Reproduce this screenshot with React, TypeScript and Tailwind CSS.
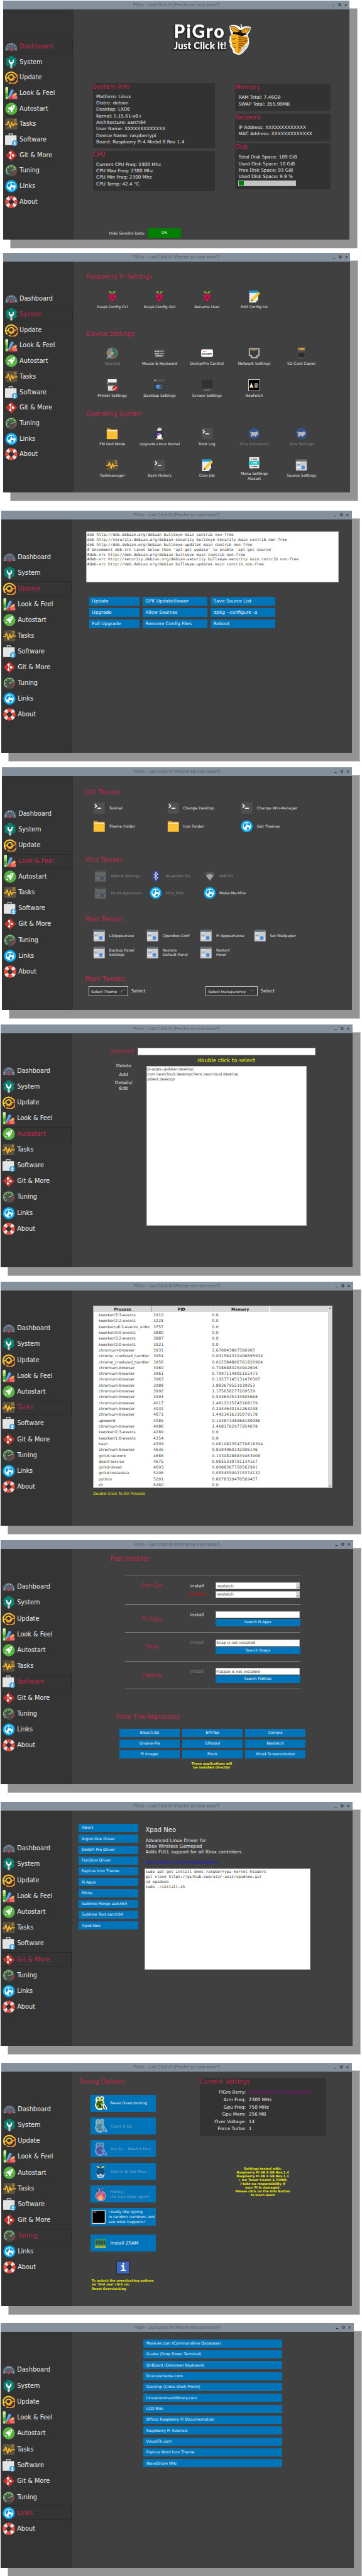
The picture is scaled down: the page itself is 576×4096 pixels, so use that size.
import React from "react";

type IconName =
  | "dashboard" | "system" | "update" | "look" | "autostart" | "tasks" | "software" | "git" | "tuning" | "globe" | "about"
  | "raspberry" | "edit" | "gparted" | "keyboard" | "deskpi" | "network" | "sdcard" | "printer" | "desktop" | "screen"
  | "neofetch" | "folder" | "tux" | "terminal" | "xfce" | "menu" | "source" | "bluetooth" | "wifi" | "pigreen" | "pigray"
  | "pipurple" | "skull" | "fire" | "console" | "ram";

const Globe = () => (
  <>
    <circle cx="12" cy="12" r="11.6" fill="#03a9f4" />
    <circle cx="12" cy="12" r="8.2" fill="#fff" />
    <path d="M5.2 9.5 8 6.5l3.2-.8.6 2.4-2 2.2.8 1.9-2.4.9.3 2.3-2.3-2.2zM13.5 5l4 2 1.6 4-2 .3-1.4-1.6-2.2.8-1-2.6zM12.3 14l3 .2 1.7 1.4-1.8 2.9-3 .6-.7-2.6z" fill="#0a96dc" />
  </>
);

const Pulse = () => (
  <>
    <rect x="1" y="1.5" width="22" height="21" rx="1" fill="#5b5240" />
    <path d="M17 3.5h5M17 6.2h5M17 8.9h5" stroke="#c9962a" strokeWidth="1.4" />
    <path d="M0 13h4l2.4-6 3.4 12 3-10 2.2 7 2-3.5h7" fill="none" stroke="#fdb827" strokeWidth="2.1" strokeLinejoin="round" />
  </>
);

const PiMascot = ({ body, leaf, line, rim }: { body: string; leaf: string; line: string; rim: string }) => (
  <>
    <path d="M4 2q4-3.500 6.800 0 3-3.500 7.200-.5 1 4-1.500 5.500 2.500 3 2 6l5 7.500-1 3.500-5-2.500q-4 3.500-8 2.500-5-1-6-5-3-4 .5-8Q2.500 7 4 2z" fill={rim} />
    <path d="M5.300 2.800q4-2 5 2L10 6.500Q5.500 7 5.300 2.800zM11.500 4q2-3 5-1.500-.5 4-5 4z" fill={leaf} />
    <path d="M6.500 8.500q5-2.500 9 0 2.500 3 1.300 6.500-2 6.500-6.600 6.500t-5.700-5.500q-.8-4 2-7.500z" fill={body} />
    <path d="M8 9l2.900 3 3.600-3M5 15l4-1.500 2.200 3 3-3 2.500 1M8.500 21l2.500-4.500L13.500 20M5.500 11l3.300 2.300M7.500 5.500l-1-2M13.500 5l1.500-1.800" fill="none" stroke={line} strokeWidth="1.200" />
    <path d="M13.500 15.500q2-2.500 4-1l4 8M15.500 15.500l2 7" fill="none" stroke={rim} strokeWidth="1.500" />
    <path d="M14.700 17l1.500 5.500M18 16.500l2.500 5" fill="none" stroke={line} strokeWidth="1.500" />
  </>
);

const drawings: Record<IconName, React.ReactNode> = {
  dashboard: (
    <>
      <path d="M.5 19.500V16a11.500 11.500 0 0 1 23 0v3.500h-7l-4.500-2-4.500 2z" fill="#546371" />
      <path d="M2.500 14.500l2 .7M4.700 9.800l1.600 1.300M8.500 6.800l.8 1.900M12 6v2M15.500 6.800l-.8 1.900M19.300 9.800l-1.600 1.300M21.500 14.500l-2 .7M2 18h2M20 18h2" stroke="#e8e8e8" strokeWidth="1.200" />
      <circle cx="12" cy="18.500" r="2.200" fill="#e0304c" />
      <path d="M11 18l5-5.500-2.500 7z" fill="#e0304c" />
    </>
  ),
  system: (
    <>
      <path d="M8.500 0h7l1.200 3.500 3.300-.7 3 5.700-2.300 2.500 2.300 3-3.300 5.500-3.200-.6-1.300 3.600H8.800l-1.300-3.600-3.200.6L1 14l2.300-3L1 8.500l3-5.700 3.300.7z" fill="#0b8071" />
      <path d="M7 6.500v5q1 3 3 3.500v7.500q2 2.500 4 0V15q2-.5 3-3.500v-5l-2.500 1v3.300q-2.500 1.600-5 0V7.500z" fill="#f4f4f4" />
      <path d="M10.200 17h3.600v5.500q-1.800 2.300-3.600 0z" fill="#c9d0d0" stroke="#59706c" strokeWidth=".7" />
    </>
  ),
  update: (
    <g fill="none" strokeLinecap="round">
      <path d="M3.800 19.500A10 10 0 1 1 19.500 5.500" stroke="#fbc72f" strokeWidth="2.600" />
      <path d="M20.200 5.500A10 10 0 1 1 8 22" stroke="#f9962b" strokeWidth="2.600" />
      <path d="M3 13.500q2.500-2 5 .5a4.500 4.500 0 1 0 3-7q-3 .5-4.500 3.500" stroke="#fbc72f" strokeWidth="2.300" />
      <path d="M21.500 11q-2 2-4.800 0M17 12a5 5 0 0 1-9.500 3" stroke="#f9962b" strokeWidth="2.300" />
    </g>
  ),
  look: (
    <>
      <path d="M5 21 11.500 5.500l4.200-.5.800 3.200L9 22z" fill="#5aa7ef" />
      <path d="M6.500 23 16 13.500l4.500-2.700 2.300 2.500-1 3z" fill="#f8a25c" />
      <path d="M6.500 23.500 7 20l9-3.500 6.500.5 1 3-.5 3.500z" fill="#f26b6b" />
      <path d="M6.500 23.500 12 16l3 7.500z" fill="#d23a2e" />
      <rect x=".7" y="0" width="5.300" height="24" rx="1.500" fill="#4fae2f" />
      <path d="M.7 1.500Q3.300-1.500 6 1.500V7H.7z" fill="#c9efa3" />
      <path d="M.7 7H6v5H.7z" fill="#8fd860" />
      <circle cx="3.300" cy="20.700" r="1.600" fill="#fff" />
    </>
  ),
  autostart: (
    <>
      <circle cx="12" cy="12" r="11.600" fill="#58b542" />
      <path d="M18.500 4.800q-5 .2-8 4l-3.500.7-1.500 3 3 .2 2.800 3 .2 3 3-1.700.7-3.400q3.700-3.500 3.300-8.800z" fill="#fff" />
      <path d="M5 18.500l1-3.500 2.500 2.500z" fill="#fff" />
      <circle cx="14.700" cy="8.900" r="1.300" fill="#58b542" />
    </>
  ),
  tasks: <Pulse />,
  software: (
    <>
      <path d="M7.500 4.500V1h7v3.500" fill="none" stroke="#dedede" strokeWidth="1.300" />
      <rect x="0" y="4" width="22" height="18.500" rx=".8" fill="#e4e4e4" />
      <circle cx="18.500" cy="18.600" r="5.400" fill="#3aa3dd" />
      <path d="M17.500 15h2v3h2l-3 2.800-3-2.800h2zM15.500 21.300h6v1.200h-6z" fill="#fff" />
    </>
  ),
  git: (
    <>
      <rect x="4" y="4" width="16" height="16" rx="1" transform="rotate(45 12 12)" fill="#c5352b" />
      <path d="M12 .5 23.500 12 12 23.500" fill="#ac2b24" opacity=".35" />
      <path d="M10.500 7v10M10.500 7l4.500 5" stroke="#fff" strokeWidth="1" />
      <circle cx="10.300" cy="7" r="2.200" fill="#fff" />
      <circle cx="10.300" cy="16.800" r="2.200" fill="#fff" />
      <circle cx="15.300" cy="12.200" r="2.200" fill="#fff" />
    </>
  ),
  tuning: (
    <>
      <circle cx="12" cy="12" r="11.600" fill="#4e4e4e" />
      <path d="M6 20A9.500 9.500 0 1 1 20.500 9" fill="none" stroke="#7fd672" strokeWidth="1.500" />
      <path d="M21 12a9.500 9.500 0 0 1-3.500 8" fill="none" stroke="#d8352f" strokeWidth="2" strokeDasharray="3 1" />
      <path d="M12 3v4M6 6l2 2M3 13h3M18 6l-2 2M6.500 19l1.200-2M11 13l9-3.500" stroke="#7fd672" strokeWidth="1.300" />
    </>
  ),
  globe: <Globe />,
  about: (
    <>
      <circle cx="12" cy="12" r="8.300" fill="none" stroke="#e64a3c" strokeWidth="7" />
      <circle cx="12" cy="12" r="8.300" fill="none" stroke="#e6e6e6" strokeWidth="7" strokeDasharray="5 8.038" strokeDashoffset="-4" />
    </>
  ),
  raspberry: (
    <>
      <path d="M5.500 1.500q5-1 6.300 3.800Q6 7 5.500 1.500zM18.500 1.500q-5-1-6.300 3.800Q18 7 18.500 1.500z" fill="#6cae3a" />
      <path d="M8 6h8l3 4.500-.5 5.500-3 4-3.500 2.500L8.500 20l-3-4L5 10.500z" fill="#c41949" />
      <path d="M8 9l4 3 4-3M12 12v5M5.500 13.500 9 16l3-1.500 3 1.500 3.500-2.500M9 16l-.5 3.500M15 16l.5 3.500M12 6v2" fill="none" stroke="#5c1029" strokeWidth="1" />
    </>
  ),
  edit: (
    <>
      <path d="M2 1h18v17l-5 6H2z" fill="#ececec" />
      <path d="M1.500.5h19V5h-19z" fill="#149fdb" />
      <path d="M15 18.500h5L15 24z" fill="#c9c9c9" />
      <path d="M20.500 2.500 24 6 10.500 20l-5.500 2 1.500-5.500z" fill="#f6c92d" />
      <path d="M6.500 17.500 9.500 20.500 5 22z" fill="#6d5a2a" />
    </>
  ),
  gparted: (
    <>
      <circle cx="12" cy="12" r="11.500" fill="#7f8583" />
      <path d="M12 12 12 1.500A10.500 10.500 0 0 1 17 21z" fill="#3e7359" />
      <path d="M12 12 3 7A10.500 10.500 0 0 0 2 15z" fill="#a28240" />
      <path d="M12 12l5 9-6 1.500z" fill="#99504c" />
      <circle cx="12" cy="12" r="3" fill="#a9adab" />
      <path d="M1 23.500 9 15" stroke="#c9c9c9" strokeWidth="1.500" />
    </>
  ),
  keyboard: (
    <>
      <rect x="1" y="4.500" width="22" height="16" rx="1" fill="#4e4e4e" />
      <path d="M3.500 8.500h13M3.500 13h9.500" stroke="#f2f2f2" strokeWidth="2.200" strokeDasharray="2 1" />
      <path d="M17.500 8.500h3M14 13h3" stroke="#f08b4a" strokeWidth="2.200" />
      <path d="M18 13h2.500M4.500 17.500h14" stroke="#f2f2f2" strokeWidth="1.600" />
    </>
  ),
  deskpi: (
    <>
      <rect x="0" y="4.500" width="24" height="15" rx="3.500" fill="#fff" stroke="#bdbdbd" strokeWidth=".8" />
      <path d="M3.500 8.500h7" stroke="#e04040" strokeWidth="1" />
      <text x="12" y="15.500" textAnchor="middle" fontFamily="DejaVu Sans" fontWeight="700" fontSize="5.200" fill="#333">DeskPi</text>
    </>
  ),
  network: (
    <>
      <path d="M2.500 3h19v14h-4v4h-11v-4h-4z" fill="#3a3a3a" stroke="#adadad" strokeWidth="2.800" strokeLinejoin="round" />
      <path d="M7 6h10" stroke="#d9a93e" strokeWidth="3" strokeDasharray="1 1" />
    </>
  ),
  sdcard: (
    <>
      <path d="M4.500 1h15.500v22H4z" fill="#4d4d4d" />
      <path d="M6 3.500h13" stroke="#e9b230" strokeWidth="5" strokeDasharray="2 .6" />
      <rect x="5.500" y="11" width="13" height="9" fill="#2d2d2d" />
    </>
  ),
  printer: (
    <>
      <rect x="3" y="0" width="18" height="7" fill="#f2f2f2" />
      <path d="M1 7h22v10H1z" fill="#4b4b4b" />
      <rect x="1.500" y="8" width="2.500" height="2.500" fill="#77e03c" />
      <rect x="3.500" y="13" width="16" height="10" fill="#d8d8d8" />
      <circle cx="18" cy="18.500" r="5.500" fill="#b9302b" />
      <path d="M15.500 20.500l3-1 1.500-3" stroke="#fff" strokeWidth="1" fill="none" />
      <circle cx="15.500" cy="20.500" r="1.300" fill="#fff" />
      <circle cx="19.500" cy="16.800" r="1.300" fill="#fff" />
    </>
  ),
  desktop: (
    <>
      <rect x="1" y="0" width="22" height="6" fill="#4f4f4f" />
      <rect x="1" y="6" width="22" height="17.500" fill="#393d40" />
      <rect x="1.800" y="1" width="2.500" height="2.500" fill="#e0e0e0" />
      <rect x="5" y="11" width="14" height="7.500" rx="3.700" fill="#4a93e6" />
      <circle cx="15.500" cy="14.700" r="3.400" fill="#474c50" />
    </>
  ),
  screen: (
    <>
      <rect x="1" y="1.500" width="22" height="18" rx="1" fill="#323232" />
      <path d="M1 18.500h22v1.500H1z" fill="#505050" />
      <path d="M5 21h14v2H5z" fill="#7f7f7f" />
    </>
  ),
  neofetch: (
    <>
      <rect x=".7" y=".7" width="22.600" height="22.600" fill="#000" stroke="#d0d0d0" strokeWidth="1.300" />
      <path d="M3 16.500q0-3 1.700-5.500 0-3.500 1.600-3.500T8 11q1.700 2.500 1.700 5.500z" fill="#eadfd0" />
      <path d="M2.500 17h3M7.500 17h3" stroke="#efb13e" strokeWidth="1.500" />
      <path d="M12.500 9h7M12.500 11.500h8M12.500 14h6M12.500 16.500h8" stroke="#dcdcdc" strokeWidth="1.400" />
    </>
  ),
  folder: (
    <>
      <path d="M1 1.500h7l2 2h13v6H1z" fill="#e79c0c" />
      <path d="M2 5h20v5H2z" fill="#f3f3f3" />
      <path d="M1 7h22v16H1z" fill="#fbc033" />
    </>
  ),
  tux: (
    <>
      <path d="M5 20q-3-4 0-9 2-3 3-7 4-7 8 0 0 4 2 7 4 6 0 10z" fill="#20304f" />
      <path d="M7.500 5q.5-5 5-5t4.500 4.500l-1.500 1.500-7 .5z" fill="#d4d4d4" />
      <path d="M8 20q-2-6 3-9 7 1 6 9l-3 3h-4z" fill="#f4f4f4" />
      <path d="M3 18 9.500 7.500 8 17z" fill="#3140c4" />
      <path d="M8 15l8-6 .8 2-7.800 6z" fill="#b9243a" />
      <path d="M5.500 21h5v2.500h-5zM14 21h5v2.500h-5z" fill="#f2d9b4" />
    </>
  ),
  terminal: (
    <>
      <rect x="1" y="1" width="22" height="22" rx="1" fill="#505050" />
      <path d="M3.500 4.500 7 8l-3.500 3.500" fill="none" stroke="#f4f4f4" strokeWidth="2" />
      <path d="M8.500 12.500h7.500" stroke="#f4f4f4" strokeWidth="2" />
    </>
  ),
  xfce: (
    <>
      <circle cx="12" cy="12" r="11.300" fill="#35528c" />
      <path d="M2.500 7l3.500 2.500 2.500-1 6 .5 2.500-2 1 1.500 1.800-1-.3 3.500 1 1.500-3 3-2 .5.500 2.500h-2l-.8-2.500H9l-2 2.500H5l1-6z" fill="#b3b7bb" />
    </>
  ),
  menu: (
    <>
      <path d="M2 0h20v22H9l-2 2-1.500-2H2z" fill="#e6e6e6" />
      <path d="M1 7.500h22v7.500H1z" fill="#1dbfc0" />
      <path d="M6 4h2M10 4h8M6 18.500h2M10 18.500h8" stroke="#555" strokeWidth="1.700" />
      <path d="M6 11.200h2M10 11.200h8" stroke="#fff" strokeWidth="1.700" />
    </>
  ),
  source: (
    <>
      <rect x="1" y="1" width="22" height="22" rx="1" fill="#c9cbcd" />
      <path d="M1 1h22v3.500H1z" fill="#606a70" />
      <path d="M3.500 7h6" stroke="#fff" strokeWidth="2" strokeDasharray="2 1.500" />
      <path d="M3.500 11h6" stroke="#4b8ae0" strokeWidth="2" strokeDasharray="2 1.500" />
      <path d="M3 17h18" stroke="#fff" strokeWidth="1.700" />
      <circle cx="15.500" cy="16.700" r="3.700" fill="#4b8ae0" />
    </>
  ),
  bluetooth: (
    <>
      <ellipse cx="12" cy="12" rx="8.300" ry="11.700" fill="#33407c" />
      <path d="M8 7.800l8 8-4 3.700v-15l4 3.700-8 8" fill="none" stroke="#cdd2de" strokeWidth="1.400" />
    </>
  ),
  wifi: (
    <>
      <path d="M1 7.500Q12-1 23 7.500L12 21z" fill="#565656" />
      <path d="M4.500 11.500Q12 5.500 19.500 11.500L12 21z" fill="#a3a3a3" />
    </>
  ),
  pigreen: <PiMascot body="#6f9f1c" leaf="#7fb01f" line="#15240a" rim="#f0f2ea" />,
  pigray: <PiMascot body="#6f9e9f" leaf="#7fae8e" line="#2c6c9c" rim="#86b4d8" />,
  pipurple: <PiMascot body="#6d5ea8" leaf="#3e78a6" line="#3a4c9a" rim="#6ca4d4" />,
  skull: (
    <>
      <path d="M4.500 1.500Q8-1 12 2.500q4-3.500 7.500-1 .5 4.500-2 6 3 2 2.500 7l-1.500 5-2 3.500h-9L5.500 19.500 4 14.500q-.5-5 2.500-7-2.500-1.500-2-6z" fill="#12507f" stroke="#3c8cc4" strokeWidth=".9" />
      <path d="M5.500 2.500q4-1.500 5.500 3-5 1-5.500-3zM18.500 2.500q-4-1.500-5.500 3 5 1 5.500-3z" fill="#c6d188" />
      <path d="M4.700 14.500 7 17.500l3.500-.5 1.500-2 1.500 2 3.500.5 2.300-3-1.300 5-2 3H8l-2-3z" fill="#d3e3ef" />
      <path d="M8.500 19.800h7" stroke="#12507f" strokeWidth="1.300" />
    </>
  ),
  fire: (
    <>
      <path d="M5 2q4-3 7 1 3-4 7-1v8H5z" fill="#26578c" />
      <path d="M6 2q3-2 5.500 2M18 2q-3-2-5.500 2" fill="none" stroke="#7eaed6" strokeWidth="1" />
      <path d="M3 14 6 8l1 3 3-8 3 7 3-5 1 5 2-2 2 7q0 8-8 9-9-1-10-10z" fill="#c65a7b" stroke="#9fb9d6" strokeWidth=".8" />
      <path d="M7 17l2-4 2 3 2-5 4 7q0 5-5 5.500-5-.5-5-6.500z" fill="#ec9a6e" />
      <path d="M10 20l2-5 2 5-2 3z" fill="#f2c98a" />
    </>
  ),
  console: (
    <>
      <rect x=".7" y=".7" width="22.600" height="22.600" rx=".8" fill="#000" stroke="#dcdcdc" strokeWidth="1.400" />
      <path d="M3 3.500h5" stroke="#fff" strokeWidth="1" />
    </>
  ),
  ram: (
    <>
      <rect x="2" y="4.500" width="20" height="15" fill="#3a9a50" />
      <path d="M3.500 10.500h17" stroke="#39474f" strokeWidth="7" strokeDasharray="3.500 1" />
      <path d="M2.500 18.500h19" stroke="#f3bd3c" strokeWidth="3" strokeDasharray="1.500 .5" />
    </>
  ),
};

const Ico = ({ name, className = "size-[20px]" }: { name: IconName; className?: string }) => (
  <svg viewBox="0 0 24 24" className={`block shrink-0 ${className}`}>
    {drawings[name]}
  </svg>
);

const navItems: [string, IconName][] = [
  ["Dashboard", "dashboard"],
  ["System", "system"],
  ["Update", "update"],
  ["Look & Feel", "look"],
  ["Autostart", "autostart"],
  ["Tasks", "tasks"],
  ["Software", "software"],
  ["Git & More", "git"],
  ["Tuning", "tuning"],
  ["Links", "globe"],
  ["About", "about"],
];

const Win = ({ active, className, children }: { active: string; className: string; children: React.ReactNode }) => (
  <section
    className={`flex shrink-0 flex-col bg-[#404040] shadow-[12px_13px_0_#939393,12px_13px_0_1px_#c6c6c6] ${className}`}
  >
    <header className="flex h-[14px] shrink-0 items-center bg-[#84909b]">
      <span className="w-[20%]" />
      <h1 className="flex-1 whitespace-nowrap text-center font-['Roboto'] text-[7.15px] leading-none text-[#56616c]">
        PiGro - Just Click It! (Perche sei cosi serio?)
      </h1>
      <svg viewBox="0 0 110 14" className="h-full w-[20%]">
        <path d="M82.500 8.500h3.500" stroke="#2d3338" strokeWidth="1" />
        <rect x="93" y="5" width="2.800" height="3" fill="none" stroke="#2d3338" strokeWidth="1" />
        <path d="M102.500 5l3.200 3.500M105.700 5l-3.200 3.500" stroke="#2d3338" strokeWidth="1" />
      </svg>
    </header>
    <div className="flex min-h-0 flex-1">
      <nav className="flex h-full w-[20.3%] shrink-0 flex-col bg-[#343434] pt-[8.5%]">
        {navItems.map(([label, icon]) => (
          <div key={label} className="flex h-[7.725%] items-center px-[1%]">
            <div
              className={`flex h-[92%] w-full items-center gap-[3px] border pl-[1px] ${
                label === active ? "border-[#2a2a2a] text-[#c3264d]" : "border-transparent text-[#ececec]"
              }`}
            >
              <Ico name={icon} />
              <span className="whitespace-nowrap text-[9.75px] leading-[12px]">{label}</span>
            </div>
          </div>
        ))}
      </nav>
      <main className="flex min-w-0 flex-1 flex-col items-start">{children}</main>
    </div>
  </section>
);

const Heading = ({ children, className = "" }: { children: React.ReactNode; className?: string }) => (
  <h2 className={`h-[12px] whitespace-nowrap text-[9.85px] leading-[12px] text-[#c3264d] ${className}`}>{children}</h2>
);

const Panel = ({ title, lines, className, children }: { title: string; lines: string[]; className: string; children?: React.ReactNode }) => (
  <div className={`bg-[#323232] ${className}`}>
    <Heading>{title}</Heading>
    <div className="pl-[5.5px] pt-[5px]">
      {lines.map((l) => (
        <p key={l} className="whitespace-nowrap text-[7.3px] leading-[10.35px] text-[#e8e8e8]">{l}</p>
      ))}
      {children}
    </div>
  </div>
);

const Logo = () => (
  <svg viewBox="0 0 136 56" className="ml-[157px] mt-[22px] h-[52px] w-[126px] shrink-0 overflow-visible">
    <g
      fontFamily="Lato, sans-serif"
      strokeLinejoin="round"
      fill="#fff"
      stroke="#fff"
      className="[filter:drop-shadow(-2px_1px_0_#1b1b1b)_drop-shadow(1px_1px_1px_#1b1b1b)]"
    >
      <text x="3" y="25" fontSize="30" fontWeight="700" textLength="86" strokeWidth=".8">PiGro</text>
      <text x="3" y="44.500" fontSize="16" fontWeight="700" textLength="90" strokeWidth=".4">Just Click It!</text>
    </g>
    <path
      d="M98 4q10-4 18 2l1-5 3 .5.500 5q7-4 15 0-1 9-6 13 3 5 3 12 0 9-7 15-6 8-12 8-6-1-9-4-1-5-3-8-4-3-2-7-4-5-1-9-1-5 3-7Q98 13 98 4z"
      fill="#fff"
      stroke="#262626"
      strokeWidth=".6"
    />
    <path d="M104 16q13-10 24 3l-10 4-13-2z" fill="#111" />
    <path d="M100 5.500q11-2 16 9-13 5-16-9zM133.500 8.500q-10-3-16 6.500 11 7 16-6.500z" fill="#f0a81e" stroke="#2a1b04" strokeWidth=".8" />
    <path d="M103 7.500l11 6M131 9.500l-12 5" stroke="#5b3a06" strokeWidth=".7" />
    <path d="M117.500 8q-.5-4 1-6" stroke="#111" strokeWidth="1.200" fill="none" />
    <path d="M102 20q5-4 13 1l14 2 1 9q-8 8-13 20-6 0-9-3-1-6-4-9-3-3-1-7-5-3-1-7-3-3 0-6z" fill="#f6ad1e" />
    <path d="M114 21l15 3 1 8q-8 6-14 17l-3 2z" fill="#dc920f" />
    <path d="M114 24l14 2M114 27.500l15 2M114 31l14 1M114 34.500l11 1M114 38l8 1M114 41.500l5 1M102 26q4 3 7 0M103 33q3 4 7 0M104 40q3 3 6 0" fill="none" stroke="#4b3004" strokeWidth=".9" />
    <path d="M131 33q-1 8-7 13-5 6-9 6 4-5 4-11 7 0 12-8z" fill="#d4d4d4" />
  </svg>
);

const Tile = ({ icon, label, dim, className = "" }: { icon: IconName; label: string; dim?: boolean; className?: string }) => (
  <div className={`flex h-[36px] w-[75.3px] flex-col items-center gap-[3px] ${className}`}>
    <Ico name={icon} className="size-[19px]" />
    <span className={`whitespace-pre text-center text-[6px] leading-[8px] ${dim ? "text-[#8a8a8a]" : "text-[#e6e6e6]"}`}>{label}</span>
  </div>
);

const RowItem = ({ icon, label, dim, faint, className = "" }: { icon: IconName; label: string; dim?: boolean; faint?: boolean; className?: string }) => (
  <div className={`flex h-[20px] shrink-0 items-center gap-[6px] ${className}`}>
    <Ico name={icon} className={faint ? "size-[19.5px] opacity-25" : "size-[19.5px]"} />
    <span className={`whitespace-pre text-[6px] leading-[7.7px] ${dim ? "text-[#8a8a8a]" : "text-[#e6e6e6]"}`}>{label}</span>
  </div>
);

const Btn = ({ children, className = "" }: { children: React.ReactNode; className?: string }) => (
  <button className={`flex shrink-0 items-center whitespace-nowrap bg-[#0074b9] leading-none text-[#eef4f9] ${className}`}>{children}</button>
);

const sources = `deb http://deb.debian.org/debian bullseye main contrib non-free
deb http://security.debian.org/debian-security bullseye-security main contrib non-free
deb http://deb.debian.org/debian bullseye-updates main contrib non-free
# Uncomment deb-src lines below then 'apt-get update' to enable 'apt-get source'
#deb-src http://deb.debian.org/debian bullseye main contrib non-free
#deb-src http://security.debian.org/debian-security bullseye-security main contrib non-free
#deb-src http://deb.debian.org/debian bullseye-updates main contrib non-free`;

const xpadScript = `sudo apt-get install dkms raspberrypi-kernel-headers
git clone https://github.com/atar-axis/xpadneo.git
cd xpadneo
sudo ./install.sh`;

const processes: [string, string, string][] = [
  ["kworker/3:3-events", "2910", "0.0"],
  ["kworker/2:2-events", "3228", "0.0"],
  ["kworker/u8:2-events_unbo", "3757", "0.0"],
  ["kworker/0:0-events", "3880", "0.0"],
  ["kworker/3:2-events", "3887", "0.0"],
  ["kworker/2:0-events", "3921", "0.0"],
  ["chromium-browser", "3931", "2.670843867566907"],
  ["chrome_crashpad_handler", "3954", "0.031564332406695934"],
  ["chrome_crashpad_handler", "3956", "0.012584806761826904"],
  ["chromium-browser", "3960", "0.7086883254942606"],
  ["chromium-browser", "3961", "0.7097114805155473"],
  ["chromium-browser", "3963", "0.19537145131470307"],
  ["chromium-browser", "3988", "1.883679551939953"],
  ["chromium-browser", "3992", "1.175656277209529"],
  ["chromium-browser", "3993", "0.5936345433505668"],
  ["chromium-browser", "4017", "1.4812215243168139"],
  ["chromium-browser", "4032", "0.2944640151263238"],
  ["chromium-browser", "4071", "1.4423416335079178"],
  ["upowerd", "4085", "0.10487338968189086"],
  ["chromium-browser", "4086", "1.4681762977954078"],
  ["kworker/2:3-events", "4289", "0.0"],
  ["kworker/1:0-events", "4354", "0.0"],
  ["bash", "4399", "0.061082354770818394"],
  ["chromium-browser", "4635", "0.8194960142996146"],
  ["gvfsd-network", "4666", "0.10308286839463908"],
  ["dconf-service", "4675", "0.0655330791134157"],
  ["gvfsd-dnssd", "4693", "0.0988367750562991"],
  ["gvfsd-metadata", "5106", "0.05545500215374132"],
  ["python", "5201", "0.8078320470569457"],
  ["sh", "5260", "0.0"],
];

const gitApps = ["Albert", "Argon One Driver", "DeskPi Pro Driver", "FanShim Driver", "Papirus Icon Theme", "Pi-Apps", "PiKiss", "Sublime Merge aarch64", "Sublime Text aarch64", "Xpad-Neo"];

const links = [
  "Mankier.com (Commandline Database)",
  "Guake (Drop Down Terminal)",
  "OnBoard (Onscreen Keyboard)",
  "Draculatheme.com",
  "Starship (Cross-Shell-Promt)",
  "Linuxcommandlibrary.com",
  "LCD Wiki",
  "Offical Raspberry Pi Documentation",
  "Raspberry Pi Tutorials",
  "VisualTk.com",
  "Papirus Nord Icon Theme",
  "WaveShare Wiki",
];

const settings: [string, string][] = [
  ["PiGro Berry:", "Honey,the fuse blew again!"],
  ["Arm Freq:", "2300 MHz"],
  ["Gpu Freq:", "750 MHz"],
  ["Gpu Mem:", "256 MB"],
  ["Over Voltage:", "14"],
  ["Force Turbo:", "1"],
];

const Dashboard = () => (
  <Win active="Dashboard" className="ml-[5px] mt-[1px] h-[380px] w-[551px]">
    <Logo />
    <div className="ml-[30.7px] mt-[42.5px] flex gap-[32.4px]">
      <div className="flex w-[194px] flex-col gap-[5px]">
        <Panel
          title="System Info"
          className="h-[103px]"
          lines={["Platform: Linux", "Distro: debian", "Desktop: LXDE", "Kernel: 5.15.61-v8+", "Architecture: aarch64", "User Name: XXXXXXXXXXXXX", "Device Name: raspberrypi", "Board: Raspberry Pi 4 Model B Rev 1.4"]}
        />
        <Panel title="CPU" className="h-[64px]" lines={["Current CPU Freq: 2300 Mhz", "CPU Max Freq: 2300 Mhz", "CPU Min Freq: 2300 Mhz", "CPU Temp: 42.4 °C"]} />
      </div>
      <div className="flex w-[152px] flex-col gap-[4.5px] pt-[1.8px]">
        <Panel title="Memory" className="h-[43px]" lines={["RAM Total: 7.46GB", "SWAP Total: 355.99MB"]} />
        <Panel title="Network" className="h-[43px]" lines={["IP Address: XXXXXXXXXXXXX", "MAC Address: XXXXXXXXXXXXX"]} />
        <Panel title="Disk" className="h-[73px]" lines={["Total Disk Space: 109 GiB", "Used Disk Space: 10 GiB", "Free Disk Space: 93 GiB", "Used Disk Space: 9.9 %"]}>
          <div className="-ml-[.5px] mt-[.8px] h-[9px] w-[92px] border border-[#b4b4b4] bg-[#c4c4c4]">
            <div className="h-full w-[8px] bg-[#008000]" />
          </div>
        </Panel>
      </div>
    </div>
    <div className="ml-[56.7px] mt-[59px] flex items-center gap-[4px] text-[6px] text-[#e8e8e8]">
      <span className="w-[57.5px] whitespace-nowrap">Hide Sensitiv Data:</span>
      <button className="h-[15px] w-[52.5px] bg-[#008000] leading-none text-white">ON</button>
    </div>
  </Win>
);

const System = () => (
  <Win active="System" className="ml-[5px] mt-[21px] h-[381px] w-[552px]">
    <Heading className="ml-[20px] mt-[17.8px]">Raspberry Pi Settings</Heading>
    <div className="ml-[24px] mt-[15.9px] flex">
      <Tile icon="raspberry" label="Raspi-Config CLI" />
      <Tile icon="raspberry" label="Raspi-Config GUI" />
      <Tile icon="raspberry" label="Rename User" />
      <Tile icon="edit" label="Edit Config.txt" />
    </div>
    <Heading className="ml-[20px] mt-[27.1px]">Device Settings</Heading>
    <div className="ml-[24px] mt-[15.4px] grid grid-cols-5 gap-y-[14.6px]">
      <Tile icon="gparted" label="Gparted" dim />
      <Tile icon="keyboard" label="Mouse & Keyboard" />
      <Tile icon="deskpi" label="DeskpiPro Control" />
      <Tile icon="network" label="Network Settings" />
      <Tile icon="sdcard" label="SD Card Copier" />
      <Tile icon="printer" label="Printer Settings" />
      <Tile icon="desktop" label="Desktop Settings" />
      <Tile icon="screen" label="Screen Settings" />
      <Tile icon="neofetch" label="NeoFetch" />
    </div>
    <Heading className="ml-[20px] mt-[13.4px]">Operating System</Heading>
    <div className="ml-[24px] mt-[15.7px] grid grid-cols-5 gap-y-[14.3px]">
      <Tile icon="folder" label="FM God Mode" />
      <Tile icon="tux" label="Upgrade Linux Kernel" />
      <Tile icon="terminal" label="Boot Log" />
      <Tile icon="xfce" label="Xfce Autostarts" dim />
      <Tile icon="xfce" label="Xfce Settings" dim />
      <Tile icon="tasks" label="Taskmanager" />
      <Tile icon="terminal" label="Bash History" />
      <Tile icon="edit" label="Cron Job" />
      <Tile icon="menu" label={"Menu Settings\nAlacart"} className="-mt-[3.5px]" />
      <Tile icon="source" label="Source Settings" />
    </div>
  </Win>
);

const Update = () => (
  <Win active="Update" className="ml-[2px] mt-[29px] h-[385px] w-[558px]">
    <pre className="ml-[21.5px] mt-[19px] h-[81px] w-[402px] border border-[#b9b9b9] bg-white pl-[1px] font-['DejaVu_Sans_Mono'] text-[6.15px] leading-[7.88px] text-[#3a3a3a]">
      {sources}
    </pre>
    <div className="ml-[26.3px] mt-[23px] grid grid-cols-[80.5px_103.5px_103.5px] gap-x-[4.7px] gap-y-[4.2px] text-[7.3px]">
      {["Update", "GPK UpdateViewer", "Save Source List", "Upgrade", "Allow Sources", "dpkg --configure -a", "Full Upgrade", "Remove Config Files", "Reboot"].map((l) => (
        <Btn key={l} className="h-[13.9px] pl-[4.8px]">{l}</Btn>
      ))}
    </div>
  </Win>
);

const Select = ({ label, className }: { label: string; className: string }) => (
  <div className={`flex h-[15.5px] items-center justify-between border-[1.5px] border-[#bdbdbd] bg-[#383838] pl-[3px] pr-[4px] text-[6px] text-[#e8e8e8] ${className}`}>
    {label}
    <span className="h-[3px] w-[6px] border-l border-t border-[#8d8d8d] bg-[#2a2a2a]" />
  </div>
);

const LookFeel = () => (
  <Win active="Look & Feel" className="ml-[3px] mt-[23px] h-[386px] w-[557px]">
    <Heading className="ml-[19px] mt-[19.7px]">GUI Tweaks</Heading>
    <div className="ml-[32px] mt-[8.7px] grid grid-cols-[117.8px_117.5px_117px] gap-y-[9px]">
      <RowItem icon="terminal" label="Tasksel" />
      <RowItem icon="terminal" label="Change Desktop" />
      <RowItem icon="terminal" label="Change Win-Manager" />
      <RowItem icon="folder" label="Theme Folder" />
      <RowItem icon="folder" label="Icon Folder" />
      <RowItem icon="globe" label="Get Themes" />
    </div>
    <Heading className="ml-[19px] mt-[38.6px]">Xfce Tweaks</Heading>
    <div className="ml-[34.3px] mt-[9px] grid grid-cols-[87.7px_85.5px_100px] gap-y-[6.6px]">
      <RowItem icon="source" label="Xfwm4 Settings" dim faint />
      <RowItem icon="bluetooth" label="Bluetooth Fix" dim />
      <RowItem icon="wifi" label="WiFi Fix" dim />
      <RowItem icon="source" label="Xfce4 Appearanc" dim faint />
      <RowItem icon="globe" label="Xfce_look" dim />
      <RowItem icon="globe" label="Make-Me-Xfce" />
    </div>
    <Heading className="ml-[19px] mt-[26.8px]">Pixel Tweaks</Heading>
    <div className="ml-[32px] mt-[9px] grid grid-cols-[85.2px_85.2px_85.2px_85.2px] gap-y-[6.9px]">
      <RowItem icon="source" label="LXAppearace" />
      <RowItem icon="source" label="OpenBox Conf" />
      <RowItem icon="source" label="Pi Appearlance" />
      <RowItem icon="source" label="Set Wallpaper" />
      <RowItem icon="source" label={"Backup Panel\nSettings"} />
      <RowItem icon="source" label={"Restore\nDefault Panel"} />
      <RowItem icon="source" label={"Restart\nPanel"} />
    </div>
    <Heading className="ml-[19px] mt-[26.9px]">Pigro Tweaks</Heading>
    <div className="ml-[25px] mt-[5.3px] flex items-center text-[7.25px] text-[#ececec]">
      <Select label="Select Theme" className="w-[62.5px]" />
      <span className="ml-[5.5px] w-[118.3px]">Select</span>
      <Select label="Select transparency" className="w-[82.3px]" />
      <span className="ml-[5px]">Select</span>
    </div>
  </Win>
);

const Autostart = () => (
  <Win active="Autostart" className="ml-[1px] mt-[23px] h-[386px] w-[560px]">
    <div className="ml-[60.5px] mt-[23px] flex h-[12px] items-center">
      <span className="w-[44.2px] text-[8.65px] leading-none text-[#c3264d]">Selected:</span>
      <div className="h-[12px] w-[282.5px] border border-[#b9b9b9] bg-white" />
    </div>
    <div className="ml-[60.5px] flex">
      <div className="flex w-[43px] flex-col items-center gap-[4.5px] pt-[12.3px] text-center text-[7.3px] leading-[9px] text-[#ececec]">
        <span>Delete</span>
        <span>Add</span>
        <span className="whitespace-pre">{"Details/\nEdit"}</span>
      </div>
      <div className="ml-[14.5px] flex w-[255px] flex-col items-center">
        <span className="mt-[2.7px] h-[10px] whitespace-nowrap text-[8.68px] leading-[10px] text-[#f4f400]">double click to select</span>
        <div className="mt-[4px] h-[254px] w-full border border-[#b9b9b9] bg-white pl-[.5px] text-[6.06px] leading-[8.33px] text-[#333]">
          <p>pi-apps-updater.desktop</p>
          <p>com.nextcloud.desktopclient.nextcloud.desktop</p>
          <p>albert.desktop</p>
        </div>
      </div>
    </div>
  </Win>
);

const Tasks = () => (
  <Win active="Tasks" className="ml-[1px] mt-[23px] h-[388px] w-[561px]">
    <div className="ml-[33px] mt-[24px] flex h-[290px] w-[381px] border border-[#a8a8a8] bg-white">
      <div className="flex-1">
        <div className="grid h-[9px] grid-cols-[93.5px_93.5px_93.5px_1fr] bg-[#d9d9d9] text-center text-[6.2px] font-bold leading-[9px] text-[#111]">
          <span className="border-r border-[#9a9a9a]">Process</span>
          <span className="border-r border-[#e8e8e8]">PID</span>
          <span className="border-r border-white">Memory</span>
          <span />
        </div>
        {processes.map(([name, pid, mem]) => (
          <div key={pid} className="grid h-[9.32px] grid-cols-[93.5px_93.5px_1fr] text-[6.1px] leading-[9.32px] text-[#3a3a3a]">
            <span className="whitespace-nowrap pl-[8px]">{name}</span>
            <span className="pl-[1.5px] tracking-[.27px]">{pid}</span>
            <span className="pl-[1.5px] tracking-[.27px]">{mem}</span>
          </div>
        ))}
      </div>
      <div className="flex w-[6px] flex-col items-center justify-between bg-[#dcdcdc] py-[1.5px]">
        <span className="border-x-[1.5px] border-b-2 border-x-transparent border-b-[#222]" />
        <span className="border-x-[1.5px] border-t-2 border-x-transparent border-t-[#222]" />
      </div>
    </div>
    <p className="ml-[33px] mt-[4px] text-[6.15px] leading-[9px] text-[#e6e600]">Double Click To Kill Process</p>
  </Win>
);

const Entry = ({ children, className }: { children?: React.ReactNode; className: string }) => (
  <div className={`flex w-[134px] items-center whitespace-nowrap border border-[#b9b9b9] bg-white pl-[.5px] text-[6.1px] leading-none text-[#333] ${className}`}>{children}</div>
);

const Combo = () => (
  <Entry className="h-[10.5px] justify-between">
    neofetch
    <span className="flex h-full w-[5.5px] items-end justify-center bg-[#d9d9d9] pb-[1px]">
      <span className="border-x-[1.5px] border-t-2 border-x-transparent border-t-[#222]" />
    </span>
  </Entry>
);

const Installer = ({ title, button, text, dim, className }: { title: string; button: string; text?: string; dim?: boolean; className: string }) => (
  <div className={`flex border-b border-[#868686] ${className}`}>
    <span className="w-[85px] self-start pt-[15.8px] text-center text-[8.6px] leading-[12px] text-[#c3264d]">{title}</span>
    <span className={`w-[59px] pt-[12px] text-center text-[7.35px] leading-none ${dim ? "text-[#858585]" : "text-[#ececec]"}`}>install</span>
    <div className="flex flex-col gap-[1px] pt-[10.3px]">
      <Entry className="h-[11px]">{text}</Entry>
      <Btn className="h-[11.7px] w-[135px] justify-center text-[5.8px]">{button}</Btn>
    </div>
  </div>
);

const Software = () => (
  <Win active="Software" className="ml-[1px] mt-[23px] h-[388px] w-[561px]">
    <Heading className="ml-[60.6px] mt-[9.9px]">Fast Installer</Heading>
    <div className="ml-[84.4px] mt-[19px] w-[278.5px] border-t-[1.5px] border-[#787878]">
      <div className="flex h-[47px] border-b border-[#868686]">
        <span className="w-[85px] pt-[10.2px] text-center text-[8.6px] leading-[12px] text-[#c3264d]">Apt-Get</span>
        <span className="flex w-[59px] flex-col gap-[4.5px] pt-[11.7px] text-center text-[7.35px] leading-[9px] text-[#ececec]">
          <span>install</span>
          <span className="text-[#d40808]">remove</span>
        </span>
        <div className="flex flex-col gap-[3.3px] pt-[11.5px]">
          <Combo />
          <Combo />
        </div>
      </div>
      <Installer title="Pi-Apps" button="Search Pi-Apps" className="h-[44.5px]" />
      <Installer title="Snap" button="Search Snaps" text="Snap is not installed" dim className="h-[45.4px]" />
      <Installer title="Flatpak" button="Search Flathub" text="Flatpak is not installed" dim className="h-[44.5px]" />
    </div>
    <Heading className="ml-[69.4px] mt-[38px]">From The Repository</Heading>
    <div className="ml-[75.6px] mt-[12.3px] grid grid-cols-[95.3px_95.3px_95.3px] gap-x-[4.7px] gap-y-[4.1px] text-[6.05px]">
      {["Bleach Bit", "BPYTop", "Compiz", "Gnome-Pie", "GParted", "Neofetch", "Pi Imager", "Plank", "Xfce4 Screenshooter"].map((l) => (
        <Btn key={l} className="h-[13px] justify-center">{l}</Btn>
      ))}
    </div>
    <p className="ml-[172px] mt-[5.5px] w-[100px] whitespace-pre text-center text-[5.05px] font-bold leading-[6.2px] text-[#f4f400]">
      {"These applications will\nbe installed directly!"}
    </p>
  </Win>
);

const GitMore = () => (
  <Win active="Git & More" className="ml-[1px] mt-[28px] h-[388px] w-[560px]">
    <div className="ml-[10px] mt-[21px] flex">
      <div className="flex w-[95.5px] flex-col gap-[4.25px] text-[6.1px]">
        {gitApps.map((l) => (
          <Btn key={l} className="h-[13px] pl-[5.3px]">{l}</Btn>
        ))}
      </div>
      <div className="ml-[10.3px] flex flex-col text-[#ececec]">
        <h2 className="ml-[1px] mt-[3.6px] text-[10px] leading-[12px]">Xpad Neo</h2>
        <p className="ml-[1px] mt-[7.7px] whitespace-pre text-[7.4px] leading-[8.8px]">
          {"Advanced Linux Driver for\nXbox Wireless Gamepad\nAdds FULL support for all Xbox controlers"}
        </p>
        <a className="ml-[1px] mt-[6.5px] text-[6.12px] leading-[9px] text-[#1010f0]">https://github.com/atar-axis/xpadneo</a>
        <pre className="mt-[5.5px] h-[161px] w-[264px] border border-[#b9b9b9] bg-white pt-[.5px] font-['DejaVu_Sans_Mono'] text-[6.15px] leading-[7.9px] text-[#3a3a3a]">
          {xpadScript}
        </pre>
      </div>
    </div>
  </Win>
);

const TuneBtn = ({ icon, children, dim, className = "" }: { icon: IconName; children: React.ReactNode; dim?: boolean; className?: string }) => (
  <Btn className={`h-[27.2px] w-[104.4px] gap-[5px] whitespace-pre pl-[5px] text-left text-[6.1px] leading-[7.9px]! ${dim ? "text-[#83a8c6]!" : ""} ${className}`}>
    <Ico name={icon} className="size-[22px]" />
    <span>{children}</span>
  </Btn>
);

const Tuning = () => (
  <Win active="Tuning" className="ml-[2px] mt-[27px] h-[387px] w-[558px]">
    <div className="flex">
      <div className="ml-[10px] flex w-[192.3px] flex-col">
        <Heading className="mt-[9.8px]">Tuning Options</Heading>
        <div className="ml-[18.3px] mt-[15px] flex flex-col gap-[8.9px]">
          <TuneBtn icon="pigreen">Reset Overclocking</TuneBtn>
          <TuneBtn icon="pigray" dim>Crank It Up</TuneBtn>
          <TuneBtn icon="pipurple" dim>You Sir... Need A Fan!</TuneBtn>
          <TuneBtn icon="skull" dim>Take It To The Max!</TuneBtn>
          <TuneBtn icon="fire" dim>{"Honey,\nthe fuse blew again!"}</TuneBtn>
          <TuneBtn icon="console" className="h-[28px]! pl-[2px]!">{"I really like typing\nin random numbers and\nsee what happens!"}</TuneBtn>
        </div>
        <TuneBtn icon="ram" className="ml-[18.3px] mt-[14px] text-[7.25px]!">Install ZRAM</TuneBtn>
        <div className="ml-[59px] mt-[14px] flex h-[23px] w-[23px] items-center justify-center border-2 border-[#333] bg-[#3a65c4] font-['DejaVu_Sans_Mono'] text-[16px] font-bold leading-none text-white">i</div>
        <p className="ml-[20.5px] mt-[6px] whitespace-pre text-[5.05px] font-bold leading-[6.1px] text-[#f4f400]">
          {"To unlock the overclocking options\non 'first use' click on:\nReset Overclocking"}
        </p>
      </div>
      <div className="mt-[10px] flex w-[201px] flex-col">
        <div className="h-[91.5px] bg-[#333]">
          <Heading>Current Settings</Heading>
          <div className="mt-[5.2px] grid grid-cols-[73.5px_1fr] gap-x-[4.8px] whitespace-nowrap text-[7.3px] leading-[11.66px] text-[#ececec]">
            {settings.map(([k, v], i) => (
              <React.Fragment key={k}>
                <span className="text-right">{k}</span>
                <span className={i === 0 ? "text-[#850a85]" : ""}>{v}</span>
              </React.Fragment>
            ))}
          </div>
        </div>
        <p className="mt-[49px] whitespace-pre text-center text-[5.05px] font-bold leading-[6.05px] text-[#f4f400]">
          {"Settings tested with:\nRaspberry Pi 4B 8 GB Rev.1.4\nRaspberry Pi 4B 4 GB Rev.1.1\n+ Ice Tower Cooler & Pi400.\nI take no responsibility if\nyour Pi is damaged.\nPlease click on the Info Button\nto learn more"}
        </p>
      </div>
    </div>
  </Win>
);

const Links = () => (
  <Win active="Links" className="ml-[1px] mt-[27px] h-[389px] w-[562px]">
    <div className="ml-[112.6px] mt-[11.7px] flex w-[221.5px] flex-col gap-[4.33px] text-[6.1px]">
      {links.map((l) => (
        <Btn key={l} className="h-[13px] pl-[5.1px]">{l}</Btn>
      ))}
    </div>
  </Win>
);

export default function App() {
  return (
    <div className="flex h-[4096px] w-[576px] flex-col items-start overflow-hidden bg-white font-['DejaVu_Sans',sans-serif]">
      <Dashboard />
      <System />
      <Update />
      <LookFeel />
      <Autostart />
      <Tasks />
      <Software />
      <GitMore />
      <Tuning />
      <Links />
    </div>
  );
}
